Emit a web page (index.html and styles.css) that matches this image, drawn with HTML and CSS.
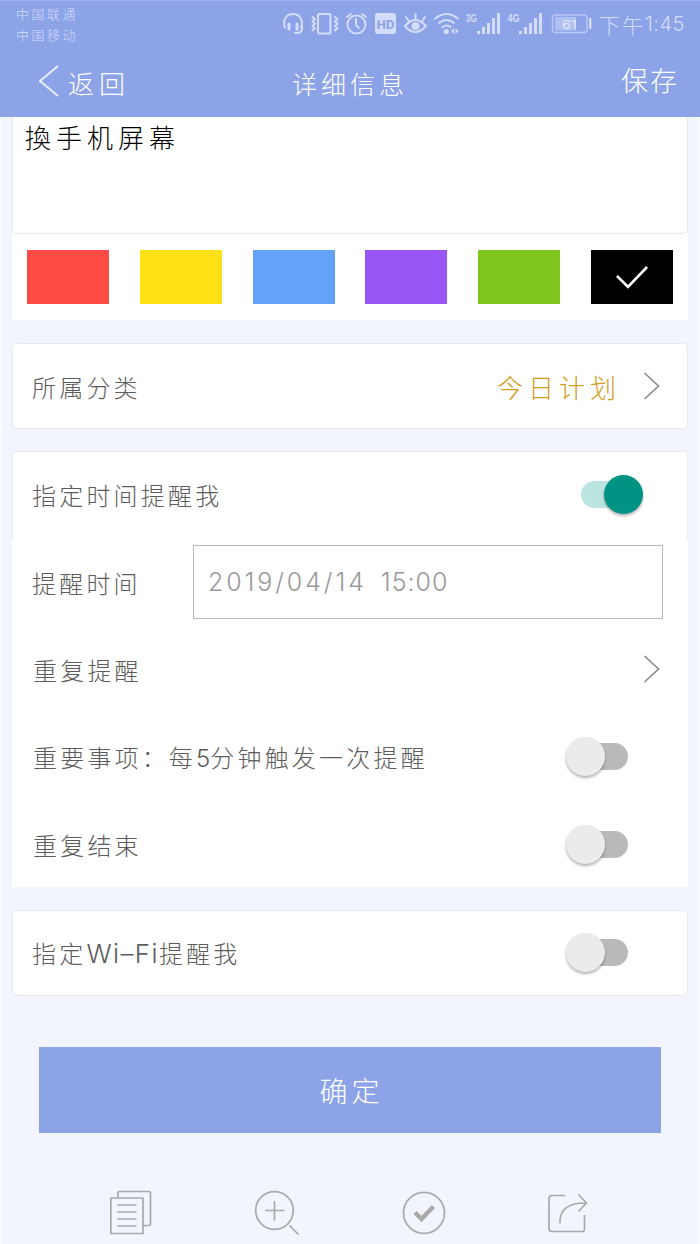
FILE: index.html
```html
<!DOCTYPE html>
<html lang="zh-CN">
<head>
<meta charset="utf-8">
<title>详细信息</title>
<link rel="stylesheet" href="styles.css">
</head>
<body>
<div class="screen">
  <header class="header">
    <div class="status">
      <div class="carriers"><div>中国联通</div><div>中国移动</div></div>
      <svg class="status-icons" width="316" height="46" viewBox="280 0 316 46">
        <g fill="none" stroke="#d3dcf8" stroke-width="2" stroke-linecap="round" stroke-linejoin="round">
          <path d="M285 27.500c-3-8 2-13.500 8-13.500s11 5.500 8 13.500M302 25v4q0 4-6 4h-1"/>
          <path stroke-width="3" d="M289 24v5M297 24v5"/>
          <rect x="318" y="14" width="12.500" height="19.500" rx="1.500"/>
          <path d="M312.500 17l2.500 2.200-2.500 2.300 2.500 2.200-2.500 2.300 2.500 2.200-2.500 2.300M335 17l2.500 2.200-2.500 2.300 2.500 2.200-2.500 2.300 2.500 2.200-2.500 2.300"/>
          <circle cx="356.500" cy="24.500" r="9"/>
          <path d="M356 19v6l3 3M347 17l4-3M362 14l4 3"/>
          <path d="M405 26q10-12 21 0q-11 12-21 0zM415.500 14v5M406 17l2.500 3.500M425 17l-2.500 3.500"/>
          <path d="M435 18.500q11.500-9 23 0M439 23q7.500-6 15 0M442.500 27q4-3 8 0"/>
        </g>
        <g fill="#d3dcf8">
          <rect x="375" y="13" width="21" height="21" rx="3"/>
          <circle cx="415.500" cy="26" r="4"/>
          <circle cx="446.300" cy="31.500" r="2.600"/>
          <path d="M454 28v6l-3-3zM455.500 28v6l3-3z"/>
        </g>
        <text class="hd" x="376.500" y="29" textLength="18" lengthAdjust="spacingAndGlyphs">HD</text>
        <text class="net" x="466" y="22" textLength="11" lengthAdjust="spacingAndGlyphs">3G</text>
        <text class="net" x="507.500" y="22" textLength="12" lengthAdjust="spacingAndGlyphs">4G</text>
        <path class="signal" d="M478.500 34v-3M483.500 34v-7M488.500 34V23M493.500 34V18M498.500 34V13M520.500 34v-3M525.500 34v-7M530.500 34V23M535.500 34V18M540.500 34V13"/>
        <rect x="552.500" y="15" width="34.500" height="17.500" rx="3" fill="none" stroke="#b9c7f3" stroke-width="1.500"/>
        <rect x="555" y="17" width="21" height="13.500" fill="#b0c0f0"/>
        <rect x="589" y="18" width="2.500" height="11" rx="1" fill="#d3dcf8"/>
        <text class="battery" x="562" y="28.500" textLength="15" lengthAdjust="spacingAndGlyphs">61</text>
      </svg>
      <div class="clock"><span>下午</span><b>1:45</b></div>
    </div>
    <nav class="nav">
      <div class="back">
        <svg width="22" height="34" viewBox="0 0 22 34"><path d="M20 2L2 17l18 15" fill="none" stroke="#e8edfc" stroke-width="2"/></svg>
        <span>返回</span>
      </div>
      <h1 class="title">详细信息</h1>
      <div class="save">保存</div>
    </nav>
  </header>

  <main class="content">
    <section class="editor">
      <div class="note">換手机屏幕</div>
      <div class="palette">
        <i class="swatch red"></i><i class="swatch yellow"></i><i class="swatch blue"></i><i class="swatch purple"></i><i class="swatch green"></i>
        <i class="swatch black"><svg width="34" height="26" viewBox="0 0 34 26"><path d="M2 12l11 11L32 3" fill="none" stroke="#fff" stroke-width="2.600"/></svg></i>
      </div>
    </section>

    <section class="card">
      <div class="row"><span class="label">所属分类</span><span class="category">今日计划</span><svg class="chevron" width="17" height="28" viewBox="0 0 17 28"><path d="M1.500 1l14 13-14 13"/></svg></div>
    </section>

    <section class="card group">
      <div class="row first"><span class="label">指定时间提醒我</span><span class="switch on"><i></i></span></div>
      <div class="row"><span class="label">提醒时间</span><div class="datetime"><span class="date">2019/04/14</span><span class="time">15:00</span></div></div>
      <div class="row shift"><span class="label">重复提醒</span><svg class="chevron" width="17" height="28" viewBox="0 0 17 28"><path d="M1.500 1l14 13-14 13"/></svg></div>
      <div class="row shift"><span class="label">重要事项<span class="colon">：</span>每<span class="five">5</span>分钟触发一次提醒</span><span class="switch"><i></i></span></div>
      <div class="row shift"><span class="label">重复结束</span><span class="switch"><i></i></span></div>
    </section>

    <section class="card last">
      <div class="row"><span class="label">指定<span class="wifi">Wi–Fi</span>提醒我</span><span class="switch"><i></i></span></div>
    </section>

    <button class="confirm">确定</button>
  </main>

  <footer class="tabs">
    <svg width="44" height="46" viewBox="0 0 44 46"><path d="M9 9V4q0-1.500 1.500-1.500H40q1.500 0 1.500 1.500v31q0 1.500-1.500 1.500h-6M1.800 9H34v35.500H1.800zM8 16h19.500M8 23h19.500M8 30h19.500M8 37h19.500"/></svg>
    <svg width="46" height="46" viewBox="0 0 46 46"><circle cx="20.500" cy="21.500" r="18.800"/><path d="M20.500 12v19.500M11 21.500h19.500M35.500 36.500l9 9"/></svg>
    <svg width="44" height="46" viewBox="0 0 44 46"><circle cx="22" cy="23.800" r="20.500"/><path class="tick" d="M13 23.500l6.500 6.500L31.500 17.500"/></svg>
    <svg width="42" height="46" viewBox="0 0 42 46"><path d="M18 6.500H5Q2 6.500 2 9.500v30q0 3 3 3h30q2.500 0 2.500-2.500V26M13 34.500Q12 14 38 14M31.500 5.500L39.500 14l-8 8.500"/></svg>
  </footer>
</div>
</body>
</html>
```
FILE: styles.css
```css
* { box-sizing: border-box; }
body {
  margin: 0;
  background: #f2f5fe;
  color: #5c5c5c;
  font-family: Inter, "Noto Sans CJK SC", sans-serif;
  font-weight: 300;
  overflow: hidden;
}
.screen {
  width: 700px;
  height: 1244px;
  display: flex;
  flex-direction: column;
  background: linear-gradient(to right, #f9faff 2px, #f2f5fe 2px, #f2f5fe 699px, #f9faff 699px);
  overflow: hidden;
}
.header {
  height: 117px;
  flex: none;
  background: #8da3e7;
  border-top: 1px solid #a0b3ee;
  color: #fff;
}
.status {
  height: 46px;
  display: flex;
  color: #d3dcf8;
}
.carriers {
  width: 264px;
  margin-left: 16px;
  padding-top: 3px;
  font-size: 13px;
  line-height: 21px;
  letter-spacing: 2.5px;
}
.status-icons { flex: none; margin-top: -1px; }
.clock {
  display: flex;
  align-items: center;
  padding-left: 3px;
  font-size: 21px;
  letter-spacing: 2px;
  white-space: nowrap;
}
.clock b { font-weight: 300; letter-spacing: .5px; font-size: 20px; }
.hd { font: 700 13px Roboto, sans-serif; fill: #8da3e7; }
.net { font: 700 11px "Liberation Sans", sans-serif; fill: #d3dcf8; }
.battery { font: 400 12px Inter, sans-serif; fill: #e0e7fb; }
.signal { fill: none; stroke: #d3dcf8; stroke-width: 3; }
.nav {
  display: grid;
  grid-template-columns: 1fr 116px 1fr;
  align-items: center;
  height: 70px;
  padding: 0 20px 0 38px;
}
.back { display: flex; align-items: center; gap: 8px; font-size: 26px; letter-spacing: 5px; }
.back svg { margin-top: -2px; }
.back span { padding-top: 1px; }
.title { margin: 2px 0 0 -9px; font-size: 25px; font-weight: 300; letter-spacing: 4px; white-space: nowrap; }
.save { justify-self: end; font-size: 27px; letter-spacing: 2px; padding-bottom: 6px; margin-right: 1px; }
.content { margin: 0 12px; flex: none; }
.editor { height: 203px; background: #fff; }
.note {
  height: 117px;
  padding: 4px 12px;
  border: 1px solid #e6e8ef;
  border-top: 0;
  border-radius: 0 0 5px 5px;
  color: #000;
  font-size: 26px;
  line-height: 36px;
  letter-spacing: 5px;
}
.palette { display: flex; justify-content: space-between; padding: 16px 15px 0; }
.swatch { width: 82px; height: 54px; display: flex; align-items: center; justify-content: center; }
.red { background: #ff4b45; }
.yellow { background: #ffe115; }
.blue { background: #62a2f9; }
.purple { background: #9956f5; }
.green { background: #7fc71e; }
.black { background: #000; }
.card {
  margin-top: 23px;
  border: 1px solid #e8e9ef;
  border-radius: 5px;
  background: #fff;
}
.row { display: flex; align-items: center; height: 84px; padding: 0 27px 0 19px; }
.group { height: 436px; margin-top: 22px; border-color: #e8e9ef transparent transparent; border-radius: 5px 5px 0 0; }
.group .row { height: 87.400px; padding-bottom: 2px; }
.group .first { margin: 0 -1px; padding: 0 28px 2px 20px; border: solid #ededf1; border-width: 0 1px; }
.group .first .label { margin-left: -1px; }
.group .shift { padding-left: 20px; }
.last .row { height: 84px; padding-bottom: 1px; }
.label { font-size: 24px; letter-spacing: 3.200px; white-space: nowrap; }
.category { margin-left: auto; margin-right: 22px; color: #d09d1d; font-size: 26px; letter-spacing: 5px; }
.chevron { fill: none; stroke: #888; stroke-width: 1.600; margin-left: auto; flex: none; }
.category + .chevron { margin-left: 0; }
.five { letter-spacing: 0; }
.colon { letter-spacing: 3px; }
.wifi { font-size: 26px; letter-spacing: 1.400px; }
.datetime {
  display: flex;
  align-items: center;
  gap: 14px;
  width: 470px;
  height: 74px;
  margin-left: auto;
  margin-right: -3px;
  padding-left: 14px;
  border: 1px solid #b9b9b9;
  color: #999;
  font-size: 25px;
}
.date { letter-spacing: 2.900px; }
.time { letter-spacing: 1px; }
.switch {
  position: relative;
  flex: none;
  width: 47px;
  height: 27px;
  margin-left: auto;
  margin-right: 32px;
  border-radius: 14px;
  background: #bababa;
}
.switch i {
  position: absolute;
  left: -15px;
  top: -6px;
  width: 39px;
  height: 39px;
  border-radius: 50%;
  background: #ebebeb;
  box-shadow: 0 2px 3px rgba(0, 0, 0, .3);
}
.switch.on { margin-right: 31px; background: #bce4e0; }
.switch.on i { left: 23px; background: #009384; }
.confirm {
  display: block;
  width: 622px;
  height: 86px;
  margin: 51px 0 0 27px;
  padding: 0 0 0 3px;
  border: 0;
  background: #8da3e7;
  color: #fff;
  font: 300 28px "Noto Sans CJK SC", sans-serif;
  letter-spacing: 4px;
}
.tabs {
  display: flex;
  justify-content: space-between;
  margin-top: 56px;
  padding: 0 111px 0 109px;
}
.tabs svg { flex: none; fill: none; stroke: #aaa; stroke-width: 1.700; }
.tabs .tick { stroke-width: 4.500; }
```
